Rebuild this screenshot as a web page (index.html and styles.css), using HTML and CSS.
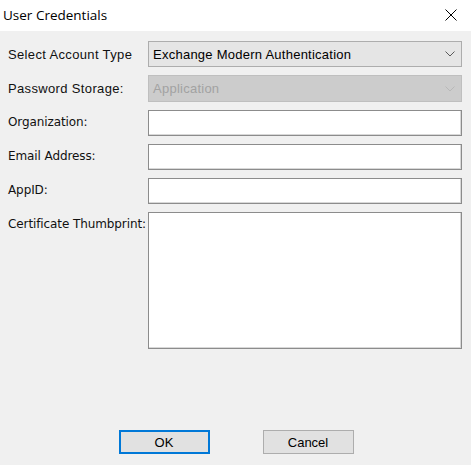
FILE: index.html
```html
<!DOCTYPE html>
<html>
<head>
<meta charset="utf-8">
<link rel="stylesheet" href="styles.css">
</head>
<body>
<div class="dialog">
  <div class="titlebar">
    <span class="title">User Credentials</span>
    <svg class="close" width="12" height="12" viewBox="0 0 12 12"><path d="M0.5 0.5 L11.5 11.5 M11.5 0.5 L0.5 11.5" stroke="#000" stroke-width="1" fill="none"/></svg>
  </div>
  <div class="form">
    <div class="row">
      <div class="label ms">Select Account Type</div>
      <div class="combo">
        <span class="combo-text">Exchange Modern Authentication</span>
        <svg class="chev" width="10" height="6" viewBox="0 0 10 6"><path d="M0.5 0.5 L5 5 L9.5 0.5" stroke="#5a5a5a" stroke-width="1" fill="none"/></svg>
      </div>
    </div>
    <div class="row">
      <div class="label ms">Password Storage:</div>
      <div class="combo disabled">
        <span class="combo-text">Application</span>
        <svg class="chev" width="10" height="6" viewBox="0 0 10 6"><path d="M0.5 0.5 L5 5 L9.5 0.5" stroke="#b8b8b8" stroke-width="1" fill="none"/></svg>
      </div>
    </div>
    <div class="row">
      <div class="label ta">Organization:</div>
      <div class="field"></div>
    </div>
    <div class="row">
      <div class="label ta">Email Address:</div>
      <div class="field"></div>
    </div>
    <div class="row">
      <div class="label ta">AppID:</div>
      <div class="field"></div>
    </div>
    <div class="row">
      <div class="label ta">Certificate Thumbprint:</div>
      <div class="field area"></div>
    </div>
  </div>
  <div class="buttons">
    <div class="btn default">OK</div>
    <div class="btn">Cancel</div>
  </div>
</div>
</body>
</html>
```
FILE: styles.css
```css
* { box-sizing: border-box; }
html, body { margin: 0; padding: 0; }
body {
  width: 471px;
  height: 465px;
  background: #f0f0f0;
  overflow: hidden;
}
.dialog { width: 471px; height: 465px; }
.titlebar {
  height: 31px;
  background: #ffffff;
  display: flex;
  align-items: center;
  justify-content: space-between;
  padding: 0 14px 0 3px;
}
.title {
  font-family: "Open Sans", "Noto Sans", sans-serif;
  font-size: 13.5px;
  color: #000;
  margin-top: -1px;
}
.close { display: block; margin-top: -2px; }
.form {
  padding: 10px 9px 0 8px;
  display: flex;
  flex-direction: column;
  gap: 8px;
}
.row {
  display: flex;
  align-items: flex-start;
}
.label {
  width: 140px;
  flex: none;
  height: 26px;
  line-height: 26px;
  padding-top: 1px;
  color: #111;
  white-space: nowrap;
  overflow: visible;
}
.ms {
  font-family: "Liberation Sans", Arial, sans-serif;
  font-size: 13px;
  letter-spacing: 0.35px;
}
.ta {
  font-family: "DejaVu Sans", sans-serif;
  font-size: 12px;
  letter-spacing: -0.1px;
  padding-top: 0;
  line-height: 24px;
}
.combo {
  width: 314px;
  height: 26px;
  background: #e5e5e5;
  border: 1px solid #adadad;
  display: flex;
  align-items: center;
  justify-content: space-between;
  padding: 0 6px 0 4px;
  font-family: "Liberation Sans", Arial, sans-serif;
  font-size: 13px;
  letter-spacing: 0.25px;
  color: #000;
}
.combo.disabled {
  background: #cccccc;
  border-color: #bfbfbf;
  color: #a2a2a2;
  height: 27px;
}
.combo-text { line-height: 24px; padding-top: 1px; }
.chev { display: block; }
.field {
  width: 314px;
  height: 26px;
  background: #ffffff;
  border: 1px solid #8c8c8c;
  box-shadow: inset -1px -1px 0 #d8d8d8;
}
.field.area { height: 137px; }
.buttons {
  margin-top: 81px;
  display: flex;
  justify-content: center;
  gap: 53px;
  padding-left: 1px;
}
.btn {
  width: 91px;
  height: 24px;
  background: #e1e1e1;
  border: 1px solid #adadad;
  font-family: "Liberation Sans", Arial, sans-serif;
  font-size: 13px;
  color: #000;
  display: flex;
  align-items: center;
  justify-content: center;
}
.btn.default {
  border: 2px solid #0078d7;
}
```
